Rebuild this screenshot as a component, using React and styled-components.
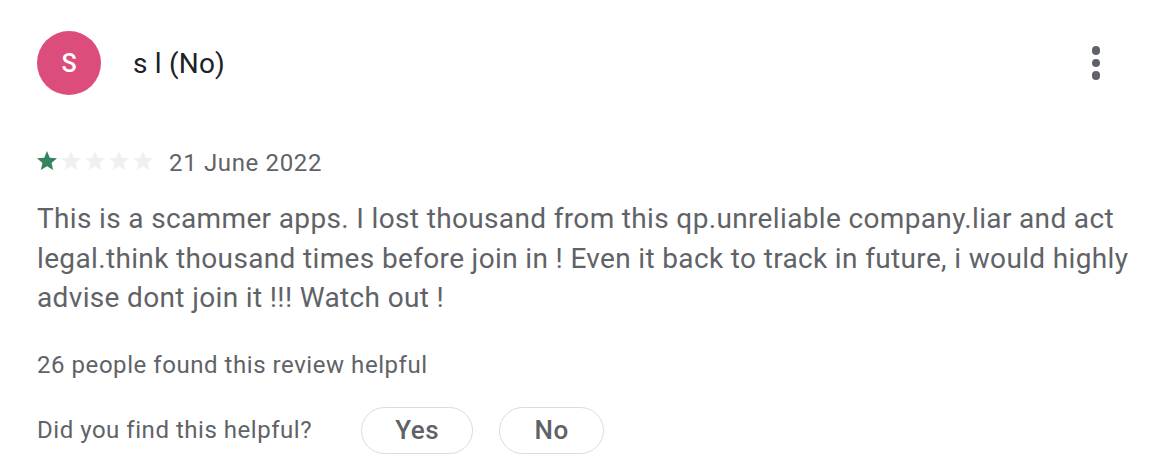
import React from "react"
import styled, { createGlobalStyle } from "styled-components"

const GlobalStyle = createGlobalStyle`
  html, body {
    margin: 0;
    padding: 0;
    background: #ffffff;
    font-family: Roboto, "Noto Sans", Arial, sans-serif;
  }
`

const Review = styled.div`
  padding: 31px 30px 0 37px;
  width: 1174px;
  box-sizing: border-box;
`

const Header = styled.div`
  display: flex;
  align-items: center;
  height: 64px;
`

const Avatar = styled.div`
  width: 64px;
  height: 64px;
  border-radius: 50%;
  background: #dc4d7b;
  color: #ffffff;
  display: flex;
  align-items: center;
  justify-content: center;
  font-size: 25px;
  font-weight: 500;
  flex-shrink: 0;
`

const Name = styled.div`
  margin-left: 32px;
  font-size: 28px;
  color: #202124;
  letter-spacing: 0.2px;
  flex: 1;
`

const MenuButton = styled.button`
  width: 48px;
  height: 48px;
  border: none;
  background: transparent;
  padding: 0;
  display: flex;
  flex-direction: column;
  align-items: center;
  justify-content: center;
  gap: 4px;
  margin-right: 24px;
`

const Dot = styled.span`
  width: 8.5px;
  height: 8.5px;
  border-radius: 50%;
  background: #5f6368;
`

const Meta = styled.div`
  display: flex;
  align-items: center;
  margin-top: 51px;
  height: 30px;
`

const Stars = styled.div`
  display: flex;
  margin-left: -2px;
  margin-right: 14px;
`

const Date = styled.span`
  font-size: 24px;
  color: #5f6368;
  letter-spacing: 0.65px;
  margin-top: 4px;
`

const Body = styled.p`
  margin: 23px 0 0;
  font-size: 28px;
  line-height: 39.5px;
  color: #5f6368;
  letter-spacing: 0.35px;
`

const Helpful = styled.div`
  margin-top: 33px;
  font-size: 24px;
  line-height: 28px;
  color: #5f6368;
  letter-spacing: 0.55px;
`

const Question = styled.div`
  display: flex;
  align-items: center;
  margin-top: 28px;
`

const QuestionText = styled.span`
  font-size: 24px;
  color: #5f6368;
  letter-spacing: 0.53px;
  margin-right: 49px;
`

const Pill = styled.button`
  height: 47px;
  width: ${(p) => p.$w}px;
  border: 1.5px solid #dadce0;
  border-radius: 24px;
  background: #ffffff;
  color: #5f6368;
  font-family: Roboto, "Noto Sans", Arial, sans-serif;
  font-size: 26px;
  font-weight: 500;
  letter-spacing: 0.5px;
  margin-right: 26px;
  padding: 0;
`

const Star = ({ filled }) => (
  <svg width="24" height="24" viewBox="0 0 24 24">
    <path
      d="M12 17.27L18.18 21l-1.64-7.03L22 9.24l-7.19-.61L12 2 9.19 8.63 2 9.24l5.46 4.73L5.82 21z"
      fill={filled ? "#34855f" : "#eff0f2"}
    />
  </svg>
)

export default function App() {
  return (
    <>
      <GlobalStyle />
      <Review>
        <Header>
          <Avatar>S</Avatar>
          <Name>s l (No)</Name>
          <MenuButton aria-label="More">
            <Dot />
            <Dot />
            <Dot />
          </MenuButton>
        </Header>
        <Meta>
          <Stars>
            {[0, 1, 2, 3, 4].map((i) => (
              <Star key={i} filled={i < 1} />
            ))}
          </Stars>
          <Date>21 June 2022</Date>
        </Meta>
        <Body>
          This is a scammer apps. I lost thousand from this qp.unreliable company.liar and act
          legal.think thousand times before join in ! Even it back to track in future, i would
          highly advise dont join it !!! Watch out !
        </Body>
        <Helpful>26 people found this review helpful</Helpful>
        <Question>
          <QuestionText>Did you find this helpful?</QuestionText>
          <Pill $w={112}>Yes</Pill>
          <Pill $w={105}>No</Pill>
        </Question>
      </Review>
    </>
  )
}
